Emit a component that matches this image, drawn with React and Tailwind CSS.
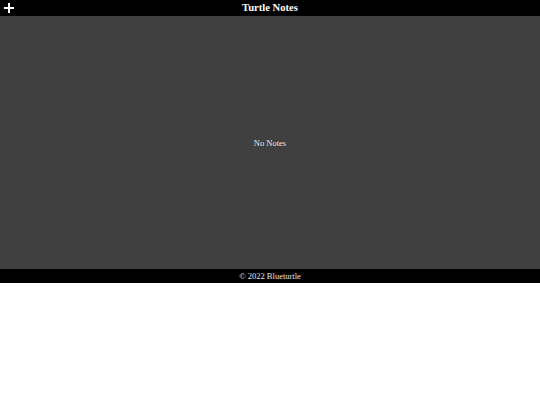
export default function App() {
  return (
    <div className="w-[540px] font-['Liberation_Serif',serif] text-white">
      <header className="relative flex h-4 items-center justify-center bg-black">
        <button className="absolute left-[3px] top-[2px] flex h-3 w-3 items-center justify-center">
          <svg width="12" height="12" viewBox="0 0 12 12">
            <path d="M6 1V11M1 6H11" stroke="white" strokeWidth="2" />
          </svg>
        </button>
        <h1 className="text-[10.6px] font-bold leading-4">Turtle Notes</h1>
      </header>
      <main className="flex h-[253px] items-center justify-center bg-[#404040]">
        <p className="text-[8.5px] leading-3 text-[#e6e6e6]">No Notes</p>
      </main>
      <footer className="flex h-[14px] items-center justify-center bg-black">
        <p className="text-[8.5px] leading-3 text-[#e6e6e6]">© 2022 Blueturtle</p>
      </footer>
    </div>
  );
}
